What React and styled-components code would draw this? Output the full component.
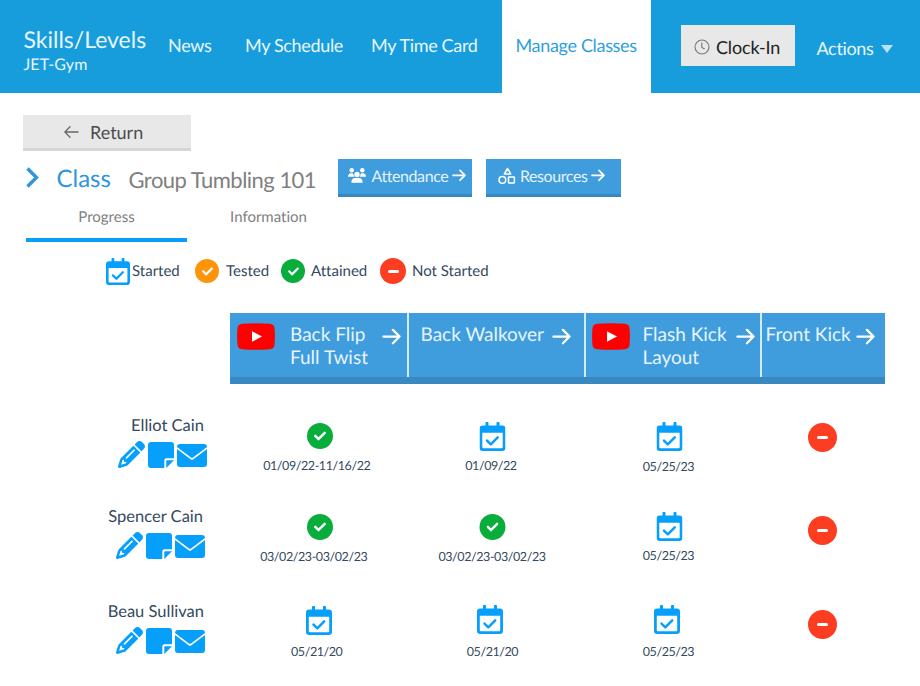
import React, { useState } from "react";
import styled, { createGlobalStyle } from "styled-components";
import { FaCheck } from "react-icons/fa";
import { FaPencil } from "react-icons/fa6";

const columns = [
  { title: ["Back Flip", "Full Twist"], video: true, width: 177, pad: 7, gap: 15, arrowGap: 14 },
  { title: ["Back Walkover"], width: 177, pad: 11.5, arrowGap: 8 },
  { title: ["Flash Kick", "Layout"], video: true, width: 176, pad: 6, gap: 12.5, arrowGap: 9.5 },
  { title: ["Front Kick"], width: 125, pad: 3.5, arrowGap: 5 },
];

const students = [
  {
    name: "Elliot Cain", height: 91, nameTop: 9, end: 26, actionsEnd: 23,
    skills: [
      { status: "attained", date: "01/09/22-11/16/22", top: 16, x: 1, dateX: -2 },
      { status: "started", date: "01/09/22", top: 16, x: -3.5, dateX: -5 },
      { status: "started", date: "05/25/23", top: 16, x: -3.5, dateX: -4, dateTop: 1 },
      { status: "none", top: 17 },
    ],
  },
  {
    name: "Spencer Cain", height: 94, nameTop: 9, end: 27, actionsEnd: 25,
    skills: [
      { status: "attained", date: "03/02/23-03/02/23", top: 15.5, x: 1, dateX: -5 },
      { status: "attained", date: "03/02/23-03/02/23", top: 15.5, x: -3.5, dateX: -4 },
      { status: "started", date: "05/25/23", top: 15, x: -3.5, dateX: -4 },
      { status: "none", top: 19 },
    ],
  },
  {
    name: "Beau Sullivan", height: 96, nameTop: 10, end: 26, actionsEnd: 25,
    skills: [
      { status: "started", date: "05/21/20", top: 15.5, x: 0, dateX: -2, dateTop: 1 },
      { status: "started", date: "05/21/20", top: 14.5, x: -6, dateX: -3.5, dateTop: 2 },
      { status: "started", date: "05/25/23", top: 14.5, x: -6, dateX: -4, dateTop: 2 },
      { status: "none", top: 19 },
    ],
  },
];

function ArrowIcon({ width = 18, stroke = 2.2 }) {
  return (
    <svg width={width} height={width * 0.9} viewBox="0 0 20 18" fill="none" stroke="currentColor" strokeWidth={stroke} strokeLinecap="round" strokeLinejoin="round">
      <path d="M1.5 9H18.5M11.5 2L18.5 9L11.5 16" />
    </svg>
  );
}

function CalendarIcon({ width = 26, height = 29 }) {
  return (
    <svg width={width} height={height} viewBox="0 0 26 29" preserveAspectRatio="none">
      <path fill="#069ffc" fillRule="evenodd" d="M6 1.2a1.5 1.5 0 0 1 3 0V3.5h8V1.2a1.5 1.5 0 0 1 3 0V3.5h2.7A3.3 3.3 0 0 1 26 6.8v18.9a3.3 3.3 0 0 1-3.3 3.3H3.3A3.3 3.3 0 0 1 0 25.7V6.8A3.3 3.3 0 0 1 3.3 3.5H6ZM2.8 10.8v14.4a1.1 1.1 0 0 0 1.1 1.1h18.2a1.1 1.1 0 0 0 1.1-1.1V10.8Z" />
      <path d="M7.5 18.7L11.3 22.3L18.2 15.3" fill="none" stroke="#069ffc" strokeWidth="2.5" strokeLinecap="round" strokeLinejoin="round" />
    </svg>
  );
}

function StatusIcon({ status, size = 26 }) {
  if (status === "started") return <CalendarIcon />;
  if (status === "none") return <Dot $size={size + 3} $color="#fd3d22"><Minus /></Dot>;
  return (
    <Dot $size={size} $color={status === "attained" ? "#08ad3b" : "#fd940a"}>
      <FaCheck size={size / 2 - 1} />
    </Dot>
  );
}

function YoutubeIcon() {
  return (
    <svg width="38" height="27" viewBox="0 0 38 27">
      <path fill="#fe0000" d="M5 .8Q19-.3 33 .8Q37 1.2 37.5 5Q38.3 13.5 37.5 22Q37 25.8 33 26.2Q19 27.3 5 26.2Q1 25.8.5 22Q-.3 13.5.5 5Q1 1.2 5 .8Z" />
      <path fill="#fff" d="M15 8.2L25 13.5L15 18.8Z" />
    </svg>
  );
}

function PeopleIcon() {
  return (
    <svg width="18" height="15" viewBox="0 0 18 15" fill="currentColor">
      <circle cx="3.7" cy="2.2" r="2.2" />
      <circle cx="14.3" cy="2.2" r="2.2" />
      <path d="M0 8.8C0 6.3 1.3 5.2 3.3 5.2C4.4 5.2 5.2 5.6 5.5 6.3C5.5 7.3 5.8 8.1 6.4 8.8Z" />
      <path d="M18 8.8C18 6.3 16.7 5.2 14.7 5.2C13.6 5.2 12.8 5.6 12.5 6.3C12.5 7.3 12.2 8.1 11.6 8.8Z" />
      <circle cx="9" cy="6.5" r="2.7" />
      <path d="M3.4 14.2C3.4 11.2 4.9 9.9 7 9.9H11C13.1 9.9 14.6 11.2 14.6 14.2Q14.6 14.8 14 14.8H4Q3.4 14.8 3.4 14.2Z" />
    </svg>
  );
}

function ShapesIcon() {
  return (
    <svg width="18" height="18" viewBox="0 0 18 18" fill="none" stroke="currentColor" strokeWidth="1.5" strokeLinejoin="round">
      <path d="M9.5 1.5L12.7 7H6.3Z" />
      <circle cx="4.4" cy="12.9" r="3.3" />
      <rect x="10.5" y="10" width="5.9" height="5.9" rx=".4" />
    </svg>
  );
}

function NoteIcon() {
  return (
    <svg width="26" height="26" viewBox="0 0 26 26" fill="currentColor">
      <path d="M3 0H23Q26 0 26 3V16.3H18.5Q16.3 16.3 16.3 18.5V26H3Q0 26 0 23V3Q0 0 3 0Z" />
      <path d="M18.3 26V19.2Q18.3 18.3 19.2 18.3H26Z" />
    </svg>
  );
}

function MailIcon() {
  return (
    <svg width="30" height="23" viewBox="0 0 30 23" fill="currentColor">
      <path d="M3 0H27Q30 0 30 3L16 13.5Q15 14.2 14 13.5L0 3Q0 0 3 0Z" />
      <path d="M0 5L13.6 15.2Q15 16.2 16.4 15.2L30 5V20Q30 23 27 23H3Q0 23 0 20Z" />
    </svg>
  );
}

function App() {
  const [tab, setTab] = useState("Progress");

  return (
    <Page>
      <GlobalStyle />
      <Header>
        <Brand>
          <h1>Skills/Levels</h1>
          <p>JET-Gym</p>
        </Brand>
        <NavItem $width={77}>News</NavItem>
        <NavItem $width={126}>My Schedule</NavItem>
        <NavItem $width={144.5}>My Time Card</NavItem>
        <NavItem $width={149} $active>Manage Classes</NavItem>
        <ClockButton>
          <svg width="16" height="16" viewBox="0 0 16 16" fill="none" stroke="#777" strokeWidth="1.1">
            <circle cx="8" cy="8" r="7" />
            <path d="M7.8 3.5V8.4L10.7 10" />
          </svg>
          Clock-In
        </ClockButton>
        <ActionsMenu>
          Actions
          <Caret />
        </ActionsMenu>
      </Header>

      <ReturnButton>
        <svg width="15" height="12" viewBox="0 0 15 12" fill="none" stroke="#666" strokeWidth="1.3" strokeLinecap="round">
          <path d="M14 6H1M6 .8L.8 6L6 11.2" />
        </svg>
        Return
      </ReturnButton>

      <TitleRow>
        <svg width="13" height="21" viewBox="0 0 13 21" fill="none" stroke="#2f95dc" strokeWidth="3.4">
          <path d="M1.5 1.5L10.5 10.5L1.5 19.5" />
        </svg>
        <ClassLabel>Class</ClassLabel>
        <ClassName>Group Tumbling 101</ClassName>
        <LinkButton $gap={6} $pad={10}>
          <PeopleIcon />
          <span>Attendance</span>
          <ArrowIcon width={14} stroke={2.6} />
        </LinkButton>
        <LinkButton $gap={4} $pad={12}>
          <ShapesIcon />
          <span>Resources</span>
          <ArrowIcon width={14} stroke={2.6} />
        </LinkButton>
      </TitleRow>

      <Tabs>
        {["Progress", "Information"].map((t) => (
          <Tab key={t} $active={t === tab} onClick={() => setTab(t)}>{t}</Tab>
        ))}
      </Tabs>

      <Legend>
        <LegendItem $width={89} $gap={2}><CalendarIcon width={24} height={27} />Started</LegendItem>
        <LegendItem $width={86} $gap={7}><StatusIcon status="tested" size={24} />Tested</LegendItem>
        <LegendItem $width={99} $gap={6}><StatusIcon status="attained" size={24} />Attained</LegendItem>
        <LegendItem $width={120} $gap={6}><StatusIcon status="none" size={23} />Not Started</LegendItem>
      </Legend>

      <SkillHeader>
        {columns.map((col) => (
          <SkillColumn key={col.title[0]} $width={col.width} $pad={col.pad}>
            {col.video && <VideoLink $gap={col.gap}><YoutubeIcon /></VideoLink>}
            <SkillTitle>{col.title.map((line) => <div key={line}>{line}</div>)}</SkillTitle>
            <SkillArrow $gap={col.arrowGap}><ArrowIcon width={19} stroke={2.4} /></SkillArrow>
          </SkillColumn>
        ))}
      </SkillHeader>

      {students.map((student) => (
        <StudentRow key={student.name} $height={student.height}>
          <Student $top={student.nameTop} $end={student.end}>
            {student.name}
            <StudentActions $shift={student.end - student.actionsEnd}>
              <FaPencil size={27} />
              <NoteIcon />
              <MailIcon />
            </StudentActions>
          </Student>
          {student.skills.map((skill, i) => (
            <SkillCell key={i} $top={skill.top}>
              <IconSlot $x={skill.x}><StatusIcon status={skill.status} /></IconSlot>
              {skill.date && <SkillDate $x={skill.dateX} $top={skill.dateTop}>{skill.date}</SkillDate>}
            </SkillCell>
          ))}
        </StudentRow>
      ))}
    </Page>
  );
}

const GlobalStyle = createGlobalStyle`
  * {
    box-sizing: border-box;
  }
  body {
    margin: 0;
    background: #fff;
    font-family: Lato, "Liberation Sans", sans-serif;
    font-variant-ligatures: none;
    text-rendering: geometricPrecision;
  }
  h1, h2, p {
    margin: 0;
    font-weight: 400;
  }
  button {
    font-family: inherit;
    font-variant-ligatures: inherit;
    text-rendering: inherit;
    border: 0;
    padding: 0;
  }
  svg {
    display: block;
    flex-shrink: 0;
  }
`;

const Page = styled.div`
  width: 920px;
  height: 686px;
  overflow: hidden;
  white-space: nowrap;
`;

const Header = styled.header`
  display: flex;
  height: 92.5px;
  background: #189ddc;
  color: #e6f6ff;
`;

const Brand = styled.div`
  width: 154px;
  padding: 24px 0 0 23.5px;

  h1 {
    font-size: 23px;
    line-height: 30px;
  }
  p {
    font-size: 16px;
    line-height: 22px;
    letter-spacing: 0.1px;
  }
`;

const NavItem = styled.div`
  width: ${(p) => p.$width}px;
  flex-shrink: 0;
  font-size: 18px;
  letter-spacing: -0.33px;
  line-height: 91px;
  padding-left: 14px;
  color: ${(p) => (p.$active ? "#2f9fdc" : "inherit")};
  background: ${(p) => (p.$active ? "#fff" : "none")};
`;

const ClockButton = styled.button`
  display: flex;
  align-items: center;
  gap: 6px;
  width: 114px;
  height: 41px;
  margin: 25px 0 0 30.5px;
  padding: 2px 0 0 13px;
  background: #e8e8e8;
  color: #222;
  font-size: 18px;
  letter-spacing: -0.15px;
`;

const ActionsMenu = styled.div`
  display: flex;
  align-items: center;
  gap: 7px;
  margin-left: 21.5px;
  height: 95px;
  font-size: 18px;
  letter-spacing: -0.33px;
`;

const Caret = styled.span`
  border: 6.5px solid transparent;
  border-top: 8px solid #b9e2fa;
  border-bottom: 0;
  margin-top: 3px;
`;

const ReturnButton = styled.button`
  display: flex;
  align-items: center;
  gap: 11px;
  width: 168px;
  height: 36px;
  margin: 22.5px 0 0 23px;
  padding-left: 41px;
  background: #e8e8e8;
  border-bottom: 3px solid #d6d6d6;
  color: #4c4c4c;
  font-size: 18px;
`;

const TitleRow = styled.div`
  display: flex;
  height: 46px;
  padding: 8px 0 0 26px;

  > svg {
    margin-top: 8px;
  }
`;

const ClassLabel = styled.h2`
  width: 72px;
  margin-left: 17.5px;
  font-size: 24px;
  line-height: 40px;
  color: #2f95dc;
`;

const ClassName = styled.div`
  width: 209px;
  font-size: 22px;
  letter-spacing: -0.52px;
  line-height: 41px;
  color: #808080;
`;

const LinkButton = styled.button`
  display: flex;
  align-items: center;
  width: 134.5px;
  height: 38px;
  margin-right: 14px;
  padding: 0 0 0 ${(p) => p.$pad}px;
  background: #3f9ddd;
  border-bottom: 3px solid #3688c1;
  color: #fff;
  font-size: 16px;
  letter-spacing: -0.42px;

  svg {
    margin-bottom: 2px;
  }
  span {
    margin: 0 4px 1px ${(p) => p.$gap}px;
    color: #e3f3ff;
  }
`;

const Tabs = styled.nav`
  display: flex;
  height: 45px;
  padding-left: 25px;
`;

const Tab = styled.button`
  width: 161px;
  height: 45px;
  margin-left: 1px;
  padding-bottom: 1px;
  background: none;
  border-bottom: 4px solid ${(p) => (p.$active ? "#069ffc" : "transparent")};
  color: #808080;
  font-size: 15px;
`;

const Legend = styled.div`
  display: flex;
  height: 71px;
  padding: 14px 0 0 106px;
`;

const LegendItem = styled.div`
  display: flex;
  align-items: center;
  gap: ${(p) => p.$gap}px;
  width: ${(p) => p.$width}px;
  height: 30px;
  font-size: 15px;
  color: #34495e;
`;

const Dot = styled.span`
  display: flex;
  align-items: center;
  justify-content: center;
  flex-shrink: 0;
  width: ${(p) => p.$size}px;
  height: ${(p) => p.$size}px;
  border-radius: 50%;
  background: ${(p) => p.$color};
  color: #fff;
`;

const Minus = styled.span`
  width: 11px;
  height: 3px;
  border-radius: 1.5px;
  background: #fff;
`;

const SkillHeader = styled.div`
  display: flex;
  width: 655px;
  height: 71px;
  margin-left: 230px;
  background: #3f9ddd;
  border-bottom: 7px solid #3888c2;
  color: #e6f4ff;
`;

const SkillColumn = styled.div`
  display: flex;
  align-items: flex-start;
  width: ${(p) => p.$width}px;
  padding: 10px 0 0 ${(p) => p.$pad}px;

  &:not(:first-child) {
    border-left: 2px solid #d5ebfa;
  }
`;

const VideoLink = styled.span`
  margin-right: ${(p) => p.$gap}px;
`;

const SkillTitle = styled.div`
  font-size: 19px;
  line-height: 23px;
`;

const SkillArrow = styled.span`
  margin: 5px 0 0 ${(p) => p.$gap}px;
  color: #fff;
`;

const StudentRow = styled.div`
  display: grid;
  grid-template-columns: 230px 177.5px 177px 176px 124px;
  height: ${(p) => p.$height}px;

  ${SkillHeader} + & {
    margin-top: 21px;
  }
`;

const Student = styled.div`
  display: flex;
  flex-direction: column;
  align-items: flex-end;
  padding: ${(p) => p.$top}px ${(p) => p.$end}px 0 0;
  font-size: 16.5px;
  line-height: 23px;
  color: #34495e;
`;

const StudentActions = styled.div`
  display: flex;
  align-items: center;
  gap: 3px;
  margin: 4px -${(p) => p.$shift}px 0 0;
  color: #069ffc;

  svg:last-child {
    margin-top: 1px;
  }
`;

const SkillCell = styled.div`
  display: flex;
  flex-direction: column;
  align-items: center;
  padding-top: ${(p) => p.$top}px;
`;

const IconSlot = styled.div`
  display: flex;
  align-items: center;
  height: 30px;
  transform: translateX(${(p) => p.$x || 0}px);
`;

const SkillDate = styled.div`
  font-size: 12.5px;
  letter-spacing: -0.42px;
  line-height: 16px;
  color: #34495e;
  margin-top: ${(p) => 7 + (p.$top || 0)}px;
  transform: translateX(${(p) => p.$x || 0}px);
`;

export default App;
